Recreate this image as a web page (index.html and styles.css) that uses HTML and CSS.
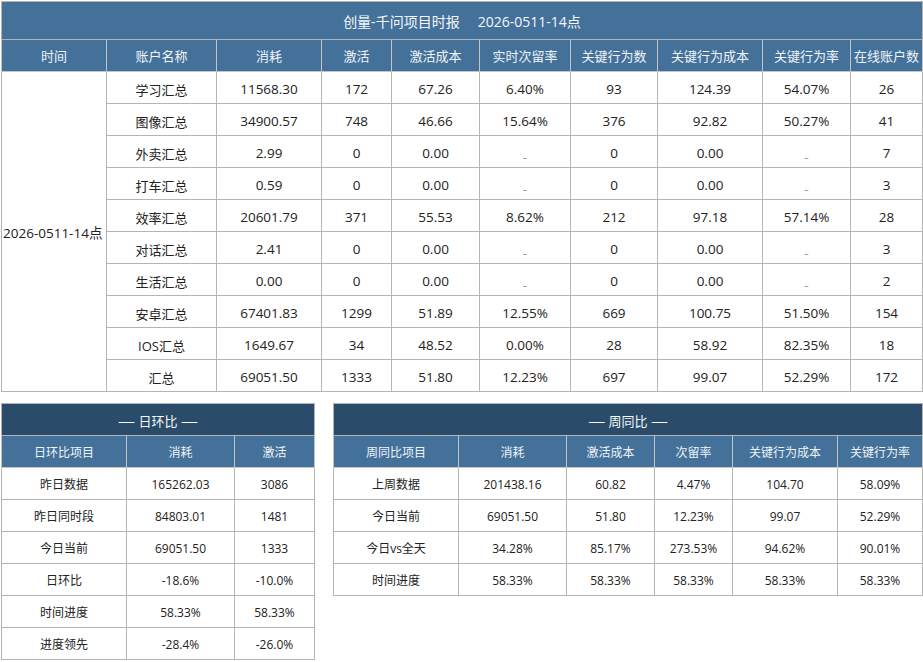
FILE: index.html
```html
<!DOCTYPE html>
<html lang="zh">
<head>
<meta charset="utf-8">
<title>创量-千问项目时报</title>
<link rel="stylesheet" href="styles.css">
</head>
<body>
<div class="page">
  <table class="grid main">
    <colgroup>
      <col style="width:105px"><col style="width:110px"><col style="width:105px"><col style="width:70px"><col style="width:88px">
      <col style="width:91px"><col style="width:87px"><col style="width:105px"><col style="width:88px"><col style="width:72px">
    </colgroup>
    <tr class="title-row"><th colspan="10">创量-千问项目时报&nbsp;&nbsp;&nbsp;&nbsp;&nbsp;2026-0511-14点</th></tr>
    <tr class="head-row">
      <th>时间</th><th>账户名称</th><th>消耗</th><th>激活</th><th>激活成本</th><th>实时次留率</th><th>关键行为数</th><th>关键行为成本</th><th>关键行为率</th><th>在线账户数</th>
    </tr>
    <tr><td rowspan="10" class="date">2026-0511-14点</td><td class="name">学习汇总</td><td>11568.30</td><td>172</td><td>67.26</td><td>6.40%</td><td>93</td><td>124.39</td><td>54.07%</td><td>26</td></tr>
    <tr><td class="name">图像汇总</td><td>34900.57</td><td>748</td><td>46.66</td><td>15.64%</td><td>376</td><td>92.82</td><td>50.27%</td><td>41</td></tr>
    <tr><td class="name">外卖汇总</td><td>2.99</td><td>0</td><td>0.00</td><td><span class="dash">_</span></td><td>0</td><td>0.00</td><td><span class="dash">_</span></td><td>7</td></tr>
    <tr><td class="name">打车汇总</td><td>0.59</td><td>0</td><td>0.00</td><td><span class="dash">_</span></td><td>0</td><td>0.00</td><td><span class="dash">_</span></td><td>3</td></tr>
    <tr><td class="name">效率汇总</td><td>20601.79</td><td>371</td><td>55.53</td><td>8.62%</td><td>212</td><td>97.18</td><td>57.14%</td><td>28</td></tr>
    <tr><td class="name">对话汇总</td><td>2.41</td><td>0</td><td>0.00</td><td><span class="dash">_</span></td><td>0</td><td>0.00</td><td><span class="dash">_</span></td><td>3</td></tr>
    <tr><td class="name">生活汇总</td><td>0.00</td><td>0</td><td>0.00</td><td><span class="dash">_</span></td><td>0</td><td>0.00</td><td><span class="dash">_</span></td><td>2</td></tr>
    <tr><td class="name">安卓汇总</td><td>67401.83</td><td>1299</td><td>51.89</td><td>12.55%</td><td>669</td><td>100.75</td><td>51.50%</td><td>154</td></tr>
    <tr><td class="name">IOS汇总</td><td>1649.67</td><td>34</td><td>48.52</td><td>0.00%</td><td>28</td><td>58.92</td><td>82.35%</td><td>18</td></tr>
    <tr><td class="name">汇总</td><td>69051.50</td><td>1333</td><td>51.80</td><td>12.23%</td><td>697</td><td>99.07</td><td>52.29%</td><td>172</td></tr>
  </table>

  <div class="bottom">
    <table class="grid small day">
      <colgroup><col style="width:125px"><col style="width:108px"><col style="width:80px"></colgroup>
      <tr class="dark-row"><th colspan="3"><span class="rule">—</span> 日环比 <span class="rule">—</span></th></tr>
      <tr class="head-row"><th>日环比项目</th><th>消耗</th><th>激活</th></tr>
      <tr><td>昨日数据</td><td>165262.03</td><td>3086</td></tr>
      <tr><td>昨日同时段</td><td>84803.01</td><td>1481</td></tr>
      <tr><td>今日当前</td><td>69051.50</td><td>1333</td></tr>
      <tr><td>日环比</td><td>-18.6%</td><td>-10.0%</td></tr>
      <tr><td>时间进度</td><td>58.33%</td><td>58.33%</td></tr>
      <tr><td>进度领先</td><td>-28.4%</td><td>-26.0%</td></tr>
    </table>

    <table class="grid small week">
      <colgroup><col style="width:125px"><col style="width:108px"><col style="width:88px"><col style="width:78px"><col style="width:105px"><col style="width:85px"></colgroup>
      <tr class="dark-row"><th colspan="6"><span class="rule">—</span> 周同比 <span class="rule">—</span></th></tr>
      <tr class="head-row"><th>周同比项目</th><th>消耗</th><th>激活成本</th><th>次留率</th><th>关键行为成本</th><th>关键行为率</th></tr>
      <tr><td>上周数据</td><td>201438.16</td><td>60.82</td><td>4.47%</td><td>104.70</td><td>58.09%</td></tr>
      <tr><td>今日当前</td><td>69051.50</td><td>51.80</td><td>12.23%</td><td>99.07</td><td>52.29%</td></tr>
      <tr><td>今日vs全天</td><td>34.28%</td><td>85.17%</td><td>273.53%</td><td>94.62%</td><td>90.01%</td></tr>
      <tr><td>时间进度</td><td>58.33%</td><td>58.33%</td><td>58.33%</td><td>58.33%</td><td>58.33%</td></tr>
    </table>
  </div>
</div>
</body>
</html>
```

FILE: styles.css
```css
html, body {
  margin: 0;
  padding: 0;
  background: #ffffff;
}

body {
  font-family: "Open Sans", "Noto Sans CJK SC", sans-serif;
  color: #222222;
}

.page {
  padding: 1px 0 0 1px;
  width: 922px;
}

.grid {
  border-collapse: collapse;
  table-layout: fixed;
}

.grid th,
.grid td {
  border: 1px solid #b4b4b4;
  padding: 0;
  text-align: center;
  white-space: nowrap;
  overflow: visible;
  font-weight: normal;
}

.main {
  width: 922px;
  font-size: 13.5px;
}

.main tr {
  height: 32px;
}

.main td {
  padding-top: 3px;
}

.main td.name {
  font-size: 13px;
}

.main .title-row {
  height: 38px;
}

.title-row th {
  background: #44719a;
  color: #f4f7fa;
  font-size: 14px;
}

.head-row th {
  background: #44719a;
  color: #eef3f8;
  border-color: #c4c4c4;
}

.main .head-row th {
  font-size: 13px;
}

.main td.date {
  text-align: left;
  padding-left: 1px;
  padding-top: 0;
}

.dash {
  font-size: 8px;
  vertical-align: baseline;
}

.bottom {
  display: flex;
  align-items: flex-start;
  gap: 18px;
  margin-top: 11px;
}

.small {
  font-size: 12px;
}

.small tr {
  height: 32px;
}

.small td {
  padding-top: 1px;
}

.day {
  width: 314px;
}

.week {
  width: 590px;
}

.dark-row th {
  background: #2a4c6a;
  color: #f4f7fa;
  font-size: 13px;
  border-color: #b4b4b4;
  padding-top: 1px;
}

.rule {
  font-size: 17px;
  font-weight: 300;
  vertical-align: -1px;
}

.small .head-row th {
  font-size: 12px;
  padding-top: 1px;
}
```
